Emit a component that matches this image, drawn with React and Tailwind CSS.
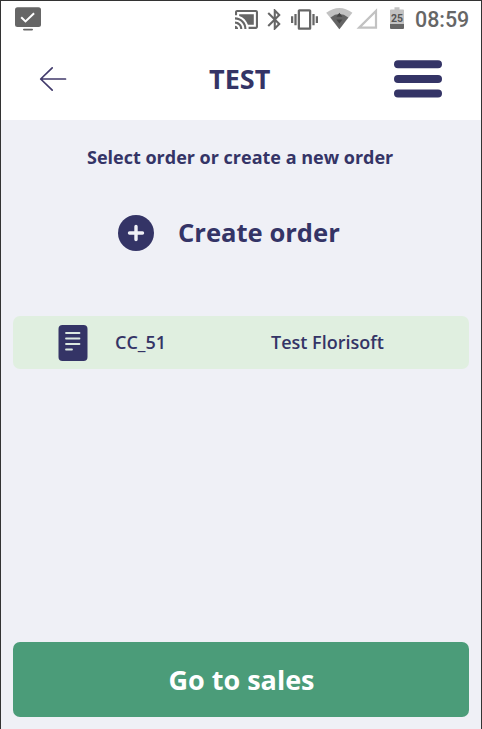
function StatusBar() {
  return (
    <div className="flex h-[39px] shrink-0 items-start bg-white text-[#666666]">
      <svg className="ml-[14px] h-[32px] w-[26px] shrink-0" viewBox="15 1 26 32" fill="none">
        <rect x="15" y="7.3" width="26" height="19.7" rx="2.5" fill="currentColor" />
        <path d="M21.2 17.2l4.3 4.2 8.6-8.2" stroke="#fff" strokeWidth="2" />
        <path d="M23.8 29.6h8.4" stroke="currentColor" strokeWidth="1.6" strokeLinecap="round" />
      </svg>
      <div className="ml-auto flex items-start">
        <svg className="h-[32px] w-[24px]" viewBox="235 1 24 32" fill="currentColor">
          <path
            transform="translate(233.95 6.8) scale(1.045 1.055)"
            d="M1 18v3h3c0-1.660-1.340-3-3-3zm0-4v2c2.760 0 5 2.240 5 5h2c0-3.870-3.130-7-7-7zm18-7H5v1.630c3.960 1.280 7.090 4.410 8.370 8.370H19V7zM1 10v2c4.970 0 9 4.030 9 9h2c0-6.080-4.930-11-11-11zm20-7H3c-1.100 0-2 .9-2 2v3h2V5h18v14h-7v2h7c1.100 0 2-.9 2-2V5c0-1.100-.9-2-2-2z"
          />
        </svg>
        <svg className="ml-[7px] h-[32px] w-[16px]" viewBox="266 1 16 32" fill="currentColor">
          <path
            transform="translate(262.3 7) scale(1.04 1.04)"
            d="M17.710 7.710L12 2h-1v7.590L6.410 5 5 6.410 10.590 12 5 17.590 6.410 19 11 14.410V22h1l5.710-5.710-4.300-4.290 4.300-4.290zM13 5.830l1.880 1.880L13 9.590V5.830zm1.880 10.460L13 18.170v-3.760l1.880 1.880z"
          />
        </svg>
        <svg className="ml-[8px] h-[32px] w-[29px]" viewBox="290 1 29 32" fill="currentColor">
          <path
            transform="translate(291 5.900) scale(1.125 1.140)"
            d="M0 15h2V9H0v6zm3 2h2V7H3v10zm19-8v6h2V9h-2zm-3 8h2V7h-2v10zM16.500 3h-9C6.670 3 6 3.670 6 4.500v15c0 .83.670 1.500 1.500 1.500h9c.83 0 1.500-.670 1.500-1.500v-15c0-.83-.670-1.500-1.500-1.500zM16 19H8V5h8v14z"
          />
        </svg>
        <svg className="ml-[6px] h-[32px] w-[28px]" viewBox="325 1 28 32">
          <path d="M326.200 12.800Q339.400 3.400 352.400 12.800L339.400 29.200z" fill="#c2c2c2" />
          <path d="M330.500 17.400Q339.400 10.500 348.300 17.400L339.400 29.200z" fill="#646464" />
          <path d="M339.400 12.800l3 4h-6zM336.400 19.500h6l-3 4z" fill="#444" />
        </svg>
        <svg className="ml-[3px] h-[32px] w-[22px]" viewBox="356 1 22 32">
          <path d="M359.200 27.600L376 11v16.600z" fill="none" stroke="#c2c2c2" strokeWidth="2.2" />
        </svg>
        <svg className="ml-[12px] h-[32px] w-[14px]" viewBox="390 1 14 32">
          <path d="M394.500 7.300h5v2.200h3.500q1 0 1 1V24h-14V10.500q0-1 1-1h3.500z" fill="#c2c2c2" />
          <path d="M390 24h14v4q0 1-1 1h-12q-1 0-1-1z" fill="#666" />
          <text x="397" y="22" textAnchor="middle" className="fill-[#555] font-['Roboto',sans-serif] text-[10.5px] font-bold">25</text>
        </svg>
        <span className="mr-[12px] ml-[11px] mt-[7px] w-[54px] font-['Roboto',sans-serif] text-[21.4px] leading-[24px] font-medium whitespace-nowrap">08:59</span>
      </div>
    </div>
  );
}

function Header() {
  return (
    <header className="flex h-[80px] shrink-0 items-center bg-white pb-[2px]">
      <svg className="ml-[38px] h-[28px] w-[28px]" viewBox="39 65 28 28" fill="none" stroke="#413a6b" strokeWidth="1.7" strokeLinecap="round" strokeLinejoin="round">
        <path d="M65.500 79H40.700M52.200 67.800L40.700 79l11.500 11.200" />
      </svg>
      <h1 className="ml-[142px] w-[62px] text-[27px] leading-[36px] font-bold whitespace-nowrap">TEST</h1>
      <svg className="mr-[39px] ml-auto h-[40px] w-[48px]" viewBox="394 59 48 40" fill="#343466">
        <rect x="394" y="60.2" width="48" height="8" rx="4" />
        <rect x="394" y="75" width="48" height="8" rx="4" />
        <rect x="394" y="89.6" width="48" height="8" rx="4" />
      </svg>
    </header>
  );
}

export default function App() {
  return (
    <div className="flex h-[729px] w-[482px] flex-col overflow-hidden border border-b-0 border-[#333] bg-[#eff0f6] font-['Open_Sans',sans-serif] text-[#343466]">
      <StatusBar />
      <Header />
      <main className="flex flex-1 flex-col px-[12px] pt-[25px] pb-[12px]">
        <p className="pl-[74px] text-[18px] leading-[24px] font-bold whitespace-nowrap">Select order or create a new order</p>
        <button className="mt-[45px] ml-[105px] flex h-[38px] items-center">
          <svg className="h-[36px] w-[36px]" viewBox="0 0 36 36">
            <circle cx="18" cy="18" r="18" fill="#343466" />
            <path d="M18 11.5v13M11.500 18h13" stroke="#eff0f6" strokeWidth="3.4" strokeLinecap="round" />
          </svg>
          <span className="ml-[24px] text-[25.6px] leading-[36px] font-bold whitespace-nowrap">Create order</span>
        </button>
        <div className="mt-[64px] flex h-[53px] items-center rounded-[7px] bg-[#e0efe0] text-[18px] leading-[26px] font-semibold">
          <svg className="ml-[45px] h-[36px] w-[30px]" viewBox="0 0 30 36">
            <rect x="0.5" width="29" height="36" rx="4" fill="#343466" />
            <path d="M8 8h13.500M8 13.500h13.500M8 19h13.500M8 24.500h6" stroke="#dce9e1" strokeWidth="1.8" strokeLinecap="round" />
          </svg>
          <span className="ml-[27px] w-[156px] pb-[2px]">CC_51</span>
          <span className="pb-[2px]">Test Florisoft</span>
        </div>
        <button className="mt-auto h-[75px] rounded-[7px] bg-[#4b9c79] pl-[1px] text-[27px] leading-[36px] font-bold text-white">Go to sales</button>
      </main>
    </div>
  );
}
